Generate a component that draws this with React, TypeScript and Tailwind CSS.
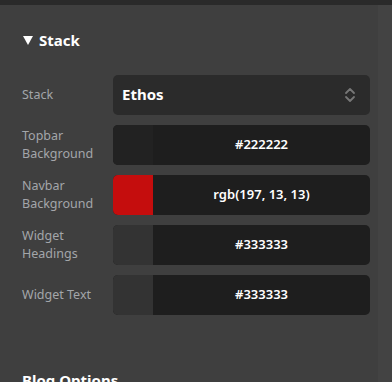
const rows = [
  { label: "Topbar Background", swatch: "bg-[#222222]", value: "#222222" },
  { label: "Navbar Background", swatch: "bg-[#c50d0d]", value: "rgb(197, 13, 13)" },
  { label: "Widget Headings", swatch: "bg-[#333333]", value: "#333333" },
  { label: "Widget Text", swatch: "bg-[#333333]", value: "#333333" },
];

function Label({ children }: { children: React.ReactNode }) {
  return (
    <div className="w-[91px] pr-2 text-[12.5px] leading-[18px] text-[#a3a6aa]">{children}</div>
  );
}

export default function App() {
  return (
    <div
      className="flex h-[382px] w-[392px] flex-col overflow-hidden bg-[#3f3f3f]"
      style={{ fontFamily: '"Noto Sans", "Open Sans", sans-serif' }}
    >
      <div className="h-[5px] shrink-0 bg-[#2a2a2a]" />
      <div className="flex flex-1">
        <div className="flex-1 pl-[23px] pr-[8px]">
          <div className="mt-[24px] flex items-center gap-[6px] text-[15px] font-bold text-white">
            <svg width="10" height="9" viewBox="0 0 10 9">
              <polygon points="0,0 10,0 5,9" fill="#fff" />
            </svg>
            <span>Stack</span>
          </div>

          <div className="mt-[23px] -ml-px flex flex-col gap-[10px]">
            <div className="flex items-center">
              <Label>Stack</Label>
              <div className="flex h-[40px] flex-1 items-center justify-between rounded-[5px] bg-[#2b2b2b] pl-[9px] pr-[14px]">
                <span className="text-[15px] font-bold text-white">Ethos</span>
                <svg width="12" height="16" viewBox="0 0 12 16" fill="none" stroke="#777" strokeWidth="1.8" strokeLinecap="round" strokeLinejoin="round">
                  <path d="M2 6l4-4 4 4" />
                  <path d="M2 10l4 4 4-4" />
                </svg>
              </div>
            </div>

            {rows.map((r) => (
              <div key={r.label} className="flex items-center">
                <Label>{r.label}</Label>
                <div className="flex h-[40px] flex-1 overflow-hidden rounded-[5px] bg-[#1e1e1e]">
                  <div className={`w-[40px] ${r.swatch}`} />
                  <div className="flex flex-1 items-center justify-center text-[13px] font-semibold text-white">
                    {r.value}
                  </div>
                </div>
              </div>
            ))}
          </div>

          <div className="mt-[54px] -ml-px text-[15px] font-bold text-white">Blog Options</div>
        </div>
        <div className="w-[14px] shrink-0 bg-[#434343]" />
      </div>
    </div>
  );
}
